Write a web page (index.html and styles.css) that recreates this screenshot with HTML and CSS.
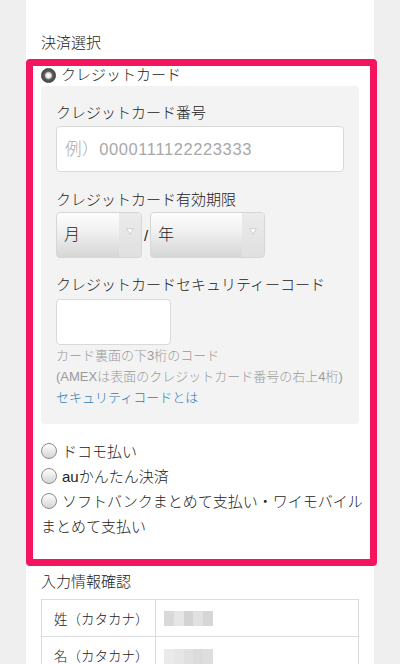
FILE: index.html
```html
<!DOCTYPE html>
<html lang="ja">
<head>
<meta charset="utf-8">
<title>決済選択</title>
<link rel="stylesheet" href="styles.css">
</head>
<body>
<div class="page">
  <h2 class="sec-title">決済選択</h2>
  <div class="pay-box">
    <div class="opt opt-first"><span class="radio checked"></span>クレジットカード</div>
    <div class="card-panel">
      <div class="field-label">クレジットカード番号</div>
      <input class="text-input wide" type="text" placeholder="例）0000111122223333">
      <div class="field-label lbl-exp">クレジットカード有効期限</div>
      <div class="expiry">
        <div class="select month">
          <span class="sel-text">月</span>
          <span class="sel-arrow"><svg width="8" height="7" viewBox="0 0 8 7"><path d="M0.7 0.7 H7.3 L4 6.3 Z" fill="#fff" stroke="#c4c4c4" stroke-width="0.8"/></svg></span>
        </div>
        <span class="slash">/</span>
        <div class="select year">
          <span class="sel-text">年</span>
          <span class="sel-arrow"><svg width="8" height="7" viewBox="0 0 8 7"><path d="M0.7 0.7 H7.3 L4 6.3 Z" fill="#fff" stroke="#c4c4c4" stroke-width="0.8"/></svg></span>
        </div>
      </div>
      <div class="field-label lbl-sec">クレジットカードセキュリティーコード</div>
      <input class="text-input short" type="text">
      <p class="hint">カード裏面の下3桁のコード<br>(AMEXは表面のクレジットカード番号の右上4桁)</p>
      <a class="link" href="#">セキュリティコードとは</a>
    </div>
    <div class="opt-list">
      <div class="opt"><span class="radio"></span>ドコモ払い</div>
      <div class="opt"><span class="radio"></span>auかんたん決済</div>
      <div class="opt"><span class="radio"></span>ソフトバンクまとめて支払い・ワイモバイル<br>まとめて支払い</div>
    </div>
  </div>
  <h2 class="sec-title sec-confirm">入力情報確認</h2>
  <table class="confirm">
    <tr>
      <td class="th">姓（カタカナ）</td>
      <td class="val"><span class="blur"><i class="b1"></i><i class="b2"></i><i class="b3"></i><i class="b4"></i><i class="b5"></i></span></td>
    </tr>
    <tr>
      <td class="th">名（カタカナ）</td>
      <td class="val"><span class="blur blur2"><i class="b2"></i><i class="b4"></i><i class="b1"></i><i class="b3"></i><i class="b5"></i></span></td>
    </tr>
  </table>
</div>
</body>
</html>
```
FILE: styles.css
```css
* { box-sizing: border-box; }

body {
  margin: 0;
  background: #efefef;
  font-family: "Liberation Sans", "Noto Sans CJK JP", sans-serif;
  font-weight: 300;
  color: #222;
}

.page {
  width: 348px;
  margin: 0 auto;
  min-height: 664px;
  background: #fff;
  padding: 32px 0 0 15px;
}

.sec-title {
  margin: 0;
  font-size: 15px;
  font-weight: 300;
  line-height: 22px;
}

.sec-confirm { margin-top: 5px; }

.pay-box {
  margin: 5px -3px 0 -15px;
  border: 7px solid #f5155e;
  border-radius: 4px;
  padding: 0 11px 20px 8px;
}

.opt {
  font-size: 15px;
  line-height: 25px;
}

.opt-first {
  display: flex;
  align-items: center;
  height: 18px;
  line-height: 18px;
}

.radio {
  display: inline-block;
  width: 16px;
  height: 16px;
  border-radius: 50%;
  border: 1px solid #8c8c8c;
  background: linear-gradient(#ffffff, #d4d4d4);
  vertical-align: middle;
  margin-right: 5px;
  position: relative;
  top: -2px;
}

.opt-first .radio { top: 0; width: 15px; height: 15px; }

.radio.checked {
  border-color: #3e3e3e;
  background: radial-gradient(circle, #ffffff 0, #f0f0f0 2px, #b8b8b8 3.2px, #5a5a5a 4.2px, #4a4a4a 7px);
}

.card-panel {
  margin-top: 2px;
  background: #f3f3f3;
  border-radius: 4px;
  padding: 16px 15px 16px;
}

.field-label {
  font-size: 15px;
  line-height: 22px;
  margin-bottom: 2px;
}

.lbl-exp { margin-top: 17px; margin-bottom: 1px; }
.lbl-sec { margin-top: 16px; margin-bottom: 3px; }

.text-input {
  display: block;
  height: 46px;
  border: 1px solid #d9d9d9;
  border-radius: 4px;
  background: #fff;
  padding: 0 8px;
  font-family: "Liberation Sans", "Noto Sans CJK JP", sans-serif;
  font-weight: 300;
  font-size: 16.5px;
  color: #222;
  outline: none;
}

.text-input::placeholder {
  color: #a8a8a8;
  letter-spacing: 0.6px;
}

.wide { width: 288px; }
.short { width: 115px; }

.expiry {
  display: flex;
  align-items: center;
}

.select {
  display: flex;
  height: 46px;
  border: 1px solid #d6d6d6;
  border-radius: 4px;
  overflow: hidden;
  background: linear-gradient(#fdfdfd, #f3f3f3 35%, #d6d6d6);
}

.month { width: 86px; }
.year { width: 115px; }

.sel-text {
  flex: 1;
  padding-left: 7px;
  font-size: 16px;
  line-height: 44px;
}

.sel-arrow {
  width: 22px;
  display: flex;
  justify-content: center;
  align-items: flex-start;
  padding-top: 15px;
  background: linear-gradient(#ebebeb, #e0e0e0);
}

.slash {
  width: 8px;
  text-align: center;
  font-size: 15px;
}

.hint {
  margin: 0;
  font-size: 13px;
  line-height: 21px;
  color: #9a9a9a;
}

.link {
  display: block;
  font-size: 13px;
  line-height: 21px;
  color: #2a7db5;
  text-decoration: none;
}

.opt-list {
  margin-top: 15px;
  margin-right: -11px;
}

.confirm {
  margin-top: 6px;
  width: 318px;
  border-collapse: collapse;
  font-size: 13.5px;
}

.confirm td {
  border: 1px solid #dcdcdc;
  height: 37px;
  padding: 0;
  vertical-align: middle;
}

.confirm .th {
  width: 114px;
  padding-left: 12px;
}

.confirm .val { padding-left: 8px; }

.blur {
  display: flex;
  height: 15px;
  width: 49px;
}

.blur i {
  flex: 1;
  display: block;
}

.b1 { background: #d9d9d9; }
.b2 { background: #e6e6e6; }
.b3 { background: #d3d3d3; }
.b4 { background: #e1e1e1; }
.b5 { background: #d6d6d6; }

.blur2 {
  height: 18px;
  opacity: 0.8;
  margin-top: 6px;
}
```
